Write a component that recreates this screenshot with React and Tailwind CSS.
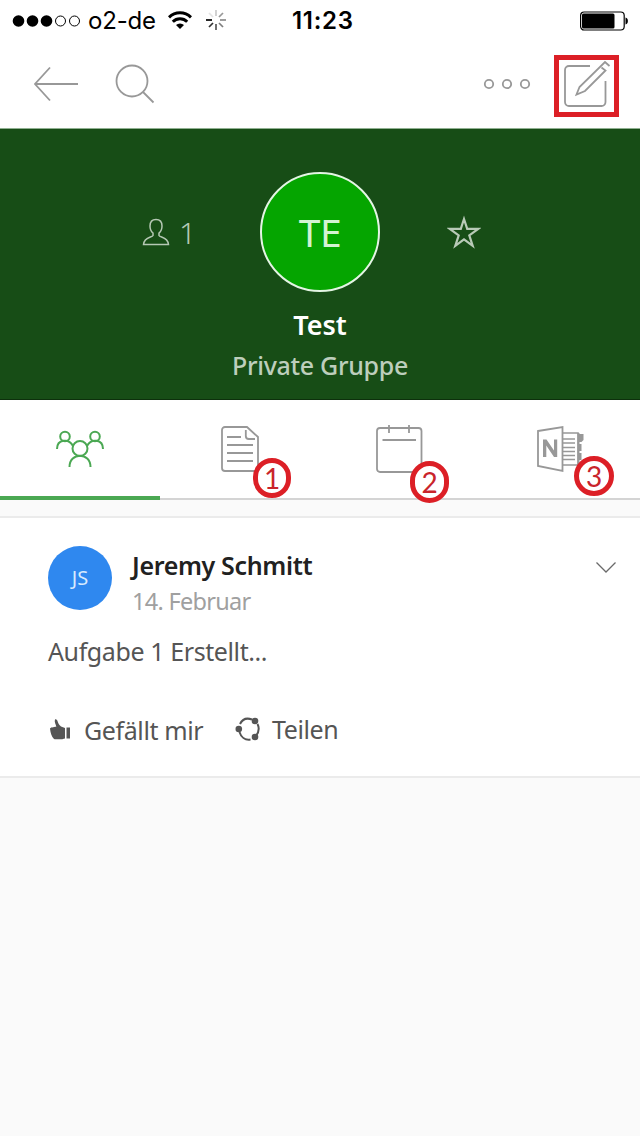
import React from 'react';

const StatusBar = () => {
  return (
    <div className="flex h-10 items-center font-['Inter','Liberation_Sans',sans-serif] text-black">
      <div className="flex w-[292px] items-center pl-[12px]">
        <svg width="70" height="14" viewBox="0 0 70 14" className="mt-px shrink-0">
          <circle cx="6.5" cy="7" r="5.8" />
          <circle cx="20.5" cy="7" r="5.8" />
          <circle cx="34.5" cy="7" r="5.8" />
          <circle cx="48.5" cy="7" r="5" fill="none" stroke="black" />
          <circle cx="62.5" cy="7" r="5" fill="none" stroke="black" />
        </svg>
        <span className="mt-0.5 ml-[6px] w-[80px] text-[24px] leading-[40px] tracking-[-0.2px] whitespace-nowrap">o2-de</span>
        <svg width="24" height="18" viewBox="0 0 24 18" fill="none" stroke="black" strokeWidth="3" className="shrink-0">
          <path d="M1 6.3a15.8 15.8 0 0 1 22 0" />
          <path d="M4.8 10.7a10.3 10.3 0 0 1 14.4 0" />
          <path d="M8 14a5.8 5.8 0 0 1 8 0L12 18Z" fill="black" stroke="none" />
        </svg>
        <svg width="20" height="20" viewBox="0 0 20 20" stroke="black" strokeWidth="1.7" className="ml-[14px] shrink-0">
          <path d="M10 0v6" opacity=".2" />
          <path d="M17 3l-4 4" opacity=".4" />
          <path d="M20 10h-6" opacity=".45" />
          <path d="M17 17l-4-4" opacity=".5" />
          <path d="M10 20v-6" opacity=".65" />
          <path d="M3 17l4-4" opacity=".8" />
          <path d="M0 10h6" />
          <path d="M3 3l4 4" opacity=".1" />
        </svg>
      </div>
      <span className="mt-0.5 text-[24px] leading-[40px] font-semibold tracking-[0.7px]">11:23</span>
      <svg width="50" height="20" viewBox="0 0 50 20" className="mt-px mr-[11px] ml-auto">
        <rect x="1.6" y="1" width="43.6" height="18" rx="3.5" fill="none" stroke="black" strokeWidth="1.2" />
        <rect x="3" y="2.5" width="32.5" height="15" rx="1.5" />
        <path d="M46.5 6.5c3.2.5 3.2 6.5 0 7z" />
      </svg>
    </div>
  );
};

const Toolbar = () => {
  return (
    <div className="flex h-[89px] items-center border-b border-[#8fb091] pr-[21px] pl-[33px]">
      <svg width="46" height="36" viewBox="0 0 46 36" fill="none" stroke="#989898" strokeWidth="1.8">
        <path d="M45 18H2M17 1.5L2 18l15 16.5" />
      </svg>
      <svg width="40" height="40" viewBox="0 0 40 40" fill="none" stroke="#989898" strokeWidth="1.8" className="ml-[36px]">
        <circle cx="17" cy="17" r="15.5" />
        <path d="M28 28l10.5 10.5" />
      </svg>
      <svg width="48" height="12" viewBox="0 0 48 12" fill="none" stroke="#989898" strokeWidth="1.8" className="mr-[23px] ml-auto">
        <circle cx="6" cy="6" r="4.2" />
        <circle cx="24" cy="6" r="4.2" />
        <circle cx="42" cy="6" r="4.2" />
      </svg>
      <div className="mt-[3px] h-[62px] w-[65px] border-5 border-[#dc1f26]">
        <svg width="55" height="52" viewBox="0 0 55 52" fill="none" stroke="#989898" strokeWidth="1.8">
          <path d="M31 6H10a4 4 0 0 0-4 4v32a4 4 0 0 0 4 4h32.500a4 4 0 0 0 4-4V21" />
          <path d="M42.500 7.500l4 3L26 31l-8.500 3.500L20.500 27 46 2l4.500 4" />
        </svg>
      </div>
    </div>
  );
};

const GroupHeader = () => {
  return (
    <div className="flex h-[271px] flex-col items-center border-b border-[#0d300c] bg-[#174d16] pt-[43px]">
      <div className="flex w-full items-center pr-[159px] pl-[142px]">
        <svg width="28" height="28" viewBox="0 0 28 28" fill="none" stroke="#b5c8b4" strokeWidth="1.5">
          <path d="M14 1.500c-4 0-6 2.500-6 6.500 0 3 1 5.500 3 7v2.500c-1 2-9 1.500-9.500 9h25c-.5-7.500-8.500-7-9.500-9V15c2-1.500 3-4 3-7 0-4-2-6.500-6-6.500z" />
        </svg>
        <span className="mt-0.5 ml-[9px] w-[81px] text-[30px] leading-[36px] font-light text-[#b5c8b4]">1</span>
        <div className="flex size-[120px] shrink-0 items-center justify-center rounded-full border-2 border-[#e4f5e4] bg-[#05a500]">
          <span className="text-[39px] leading-[48px] tracking-[-0.5px] text-[#d5f3d3]">TE</span>
        </div>
        <svg width="34" height="34" viewBox="0 0 34 34" fill="none" stroke="#b8cab7" strokeWidth="2.2" className="ml-auto">
          <path d="M17 4l3.200 9.900h11l-8.900 6.400 3.400 10.500L17 24.300l-8.700 6.500 3.400-10.500-8.900-6.400h11z" />
        </svg>
      </div>
      <h1 className="mt-[15px] text-[27px] leading-[36px] font-semibold text-white">Test</h1>
      <p className="mt-[4px] text-[25px] leading-[36px] font-medium tracking-[-0.3px] text-[#bdcebc]">Private Gruppe</p>
    </div>
  );
};

const Marker = ({ number, className }) => {
  return (
    <span
      className={`absolute flex items-center justify-center rounded-full border-5 border-[#dc1f26] bg-white font-['Lato',sans-serif] text-[28px] leading-none text-[#c9242b] ${className}`}
    >
      {number}
    </span>
  );
};

const Tabs = () => {
  return (
    <div className="flex h-[100px] bg-white text-[#989898]">
      <div className="w-40 border-b-4 border-[#4ba853] pt-[30px] pl-[56px]">
        <svg width="48" height="38" viewBox="0 0 48 38" fill="none" stroke="#4ba853" strokeWidth="2">
          <circle cx="9" cy="6.5" r="4.8" />
          <circle cx="39" cy="6.5" r="4.8" />
          <circle cx="24" cy="18.500" r="7.500" />
          <path d="M1 19c0-10 12-11 16-3M47 19c0-10-12-11-16-3M13.500 37c0-15 21-15 21 0" />
        </svg>
      </div>
      <div className="relative w-40 border-b-2 border-[#d4d4d4] pt-[25px] pl-[60px]">
        <svg width="40" height="48" viewBox="0 0 40 48" fill="none" stroke="currentColor" strokeWidth="1.8">
          <path d="M27 2H5a3 3 0 0 0-3 3v38a3 3 0 0 0 3 3h30a3 3 0 0 0 3-3V12z" />
          <path d="M25.800 5v6a3 3 0 0 0 3 3H35M7 12h14M7 20h26M7 28h26M7 36h26" />
        </svg>
        <Marker number={1} className="top-[58px] left-[93px] h-10 w-[38px]" />
      </div>
      <div className="relative w-40 border-b-2 border-[#d4d4d4] pt-[24px] pl-[56px]">
        <svg width="47" height="50" viewBox="0 0 47 50" fill="none" stroke="currentColor" strokeWidth="1.8">
          <rect x="1" y="4" width="44.500" height="44" rx="3" />
          <path d="M13 1v8M33 1v8M6.500 16h33.500" />
        </svg>
        <Marker number={2} className="top-[61px] left-[90px] h-[42px] w-[39px]" />
      </div>
      <div className="relative w-40 border-b-2 border-[#d4d4d4] pt-[25px] pl-[57px]">
        <svg width="47" height="48" viewBox="0 0 47 48" fill="none" stroke="currentColor" strokeWidth="1.8">
          <path d="M1 6l24.500-4v44L1 41z" />
          <path d="M26 8h15v32H26M26 14h12M26 18h12M26 22.500h12M26 26.500h12M26 30.500h12M26 34.500h12" strokeWidth="1.600" />
          <path d="M41.500 8v31" strokeWidth="2" />
          <path d="M41 9h5.500v6l-2 2h-3.500zM41 19h3.500v7H41zM41 28h3.500v7H41z" fill="currentColor" stroke="none" />
          <path d="M6 32V14.500h3.500l7.500 11v-11h3.200V32H17L9.300 20.500V32z" fill="currentColor" stroke="none" />
        </svg>
        <Marker number={3} className="top-[56px] left-[94px] size-10" />
      </div>
    </div>
  );
};

const Post = ({ initials, author, date, text }) => {
  return (
    <div className="mt-4 h-[262px] border-y-2 border-[#ebebeb] bg-white px-12 pt-7">
      <div className="flex">
        <div className="flex size-16 items-center justify-center rounded-full bg-[#2f88ef] text-[20px] text-[#d8eafe]">
          {initials}
        </div>
        <div className="ml-5 flex flex-col">
          <span className="text-[25px] leading-[38px] font-semibold tracking-[-0.35px] whitespace-nowrap text-[#212121]">{author}</span>
          <span className="text-[23.5px] leading-[34px] tracking-[-0.7px] whitespace-nowrap text-[#a0a0a0]">{date}</span>
        </div>
        <svg width="22" height="12" viewBox="0 0 22 12" fill="none" stroke="#6a6a6a" strokeWidth="1.3" className="mt-[15px] -mr-[25px] ml-auto">
          <path d="M1.500 1.500l9.500 9.500L20.500 1.500" />
        </svg>
      </div>
      <p className="mt-[15px] text-[25px] leading-[36px] tracking-[-0.4px] text-[#555]">{text}</p>
      <div className="mt-[41px] flex items-center text-[25px] leading-[36px] tracking-[-0.4px] text-[#555]">
        <svg width="24" height="22" viewBox="0 0 24 22" fill="#555">
          <path d="M7 1.500c1-.8 2 .2 2.500 1.500.6 2.300 1.500 4 3.500 5.500l4 1.500v10.500c-2 1-9 1-11 .5C3.500 18.500 2.500 15 2 10.500 2 9.500 5.500 9 8.300 8.700 8 6.500 6 4 7 1.500z" />
          <path d="M18.500 9.500h3.500v11h-3.500z" />
        </svg>
        <span className="mt-0.5 ml-[12px] w-[152px]">Gefällt mir</span>
        <svg width="26" height="26" viewBox="0 0 26 26" fill="none" stroke="#555" strokeWidth="2" className="-ml-px">
          <path d="M5 8C8 2 13 2 17 3.500M22.500 8c2 4 1.500 8-1.500 12M15.500 23.500C10 24.500 6 21 4.500 16" />
          <circle cx="3.800" cy="13" r="3.300" fill="#555" stroke="none" />
          <circle cx="20" cy="5" r="3.300" fill="#555" stroke="none" />
          <circle cx="20" cy="21" r="3.300" fill="#555" stroke="none" />
        </svg>
        <span className="ml-[11px]">Teilen</span>
      </div>
    </div>
  );
};

const App = () => {
  return (
    <div className="min-h-screen w-[640px] bg-[#fafafa] font-['Noto_Sans','Open_Sans',sans-serif]">
      <div className="bg-white">
        <StatusBar />
        <Toolbar />
      </div>
      <GroupHeader />
      <Tabs />
      <Post initials="JS" author="Jeremy Schmitt" date="14. Februar" text="Aufgabe 1 Erstellt..." />
    </div>
  );
};

export default App;
